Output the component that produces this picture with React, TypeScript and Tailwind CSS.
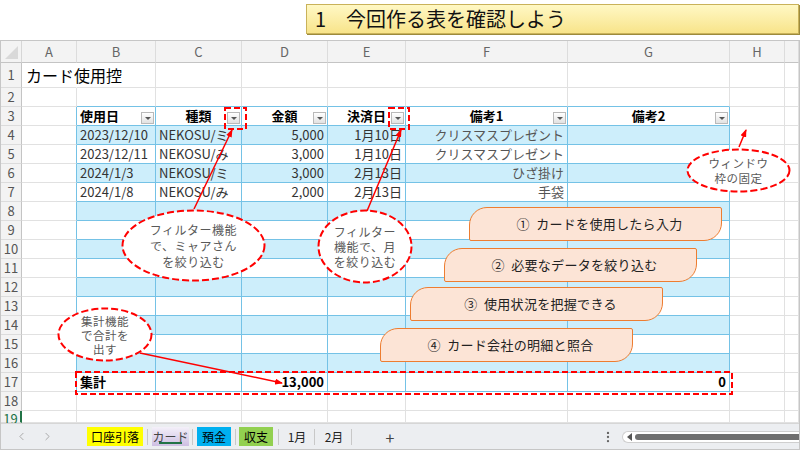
import { ChevronLeft, ChevronRight, EllipsisVertical } from "lucide-react";

type Align = "left" | "right" | "center";
type CellData = { text: string; align?: Align; bold?: boolean; filter?: boolean; tone?: "dim" };

const letters = ["", "A", "B", "C", "D", "E", "F", "G", "H", ""];

const cells: Record<string, CellData> = {
  "1-1": { text: "カード使用控" },
  "3-2": { text: "使用日", bold: true, filter: true },
  "3-3": { text: "種類", bold: true, filter: true, align: "center" },
  "3-4": { text: "金額", bold: true, filter: true, align: "center" },
  "3-5": { text: "決済日", bold: true, filter: true, align: "center" },
  "3-6": { text: "備考1", bold: true, filter: true, align: "center" },
  "3-7": { text: "備考2", bold: true, filter: true, align: "center" },
  "4-2": { text: "2023/12/10" },
  "4-3": { text: "NEKOSU/ミ" },
  "4-4": { text: "5,000", align: "right" },
  "4-5": { text: "1月10日", align: "right" },
  "4-6": { text: "クリスマスプレゼント", align: "right", tone: "dim" },
  "5-2": { text: "2023/12/11" },
  "5-3": { text: "NEKOSU/み" },
  "5-4": { text: "3,000", align: "right" },
  "5-5": { text: "1月10日", align: "right" },
  "5-6": { text: "クリスマスプレゼント", align: "right", tone: "dim" },
  "6-2": { text: "2024/1/3" },
  "6-3": { text: "NEKOSU/ミ" },
  "6-4": { text: "3,000", align: "right" },
  "6-5": { text: "2月13日", align: "right" },
  "6-6": { text: "ひざ掛け", align: "right", tone: "dim" },
  "7-2": { text: "2024/1/8" },
  "7-3": { text: "NEKOSU/み" },
  "7-4": { text: "2,000", align: "right" },
  "7-5": { text: "2月13日", align: "right" },
  "7-6": { text: "手袋", align: "right", tone: "dim" },
  "17-2": { text: "集計", bold: true },
  "17-4": { text: "13,000", bold: true, align: "right" },
  "17-7": { text: "0", bold: true, align: "right" },
};

function FilterButton() {
  return (
    <span className="absolute bottom-[1px] right-[1px] flex h-[12px] w-[13px] items-center justify-center border border-[#b9b9b9] bg-linear-to-b from-white to-[#e2e2e2]">
      <span className="h-0 w-0 border-x-[3px] border-t-[3px] border-x-transparent border-t-[#555]" />
    </span>
  );
}

function SheetCell({ r, c }: { r: number; c: number }) {
  if (r === 0) {
    if (c === 0) {
      return (
        <div className="relative border-r border-b border-r-[#d6d6d6] border-b-[#c4c4c4] bg-[#f3f3f3]">
          <span className="absolute bottom-[3px] right-[3px] h-0 w-0 border-b-[13px] border-l-[13px] border-b-[#d9d9d9] border-l-transparent" />
        </div>
      );
    }
    return (
      <div className="flex items-center justify-center border-r border-b border-r-[#dcdcdc] border-b-[#c4c4c4] bg-[#f3f3f3] text-[13px] text-[#666]">
        {letters[c]}
      </div>
    );
  }

  if (c === 0) {
    return r === 19 ? (
      <div className="flex items-start justify-center border-r-2 border-b border-r-[#217346] border-b-[#dcdcdc] bg-[#f3f3f3] pt-[1px] text-[13px] leading-[13px] text-[#217346]">
        {r}
      </div>
    ) : (
      <div className="flex items-center justify-center border-r border-b border-r-[#c4c4c4] border-b-[#dcdcdc] bg-[#f3f3f3] text-[13px] text-[#555]">
        {r}
      </div>
    );
  }

  const inCols = c >= 2 && c <= 7;
  const blueBottom = inCols && r >= 2 && r <= 17;
  const blueRight = r >= 3 && r <= 17 && c >= 1 && c <= 7;
  const banded = inCols && r >= 4 && r <= 16 && r % 2 === 0;
  const data = cells[`${r}-${c}`];

  const right =
    r === 1 && c === 1 ? "border-r-white" : blueRight ? "border-r-[#74c2e6]" : "border-r-[#e1e1e1]";
  const bottom = blueBottom ? "border-b-[#74c2e6]" : "border-b-[#e1e1e1]";
  const fill = banded ? "bg-[#cdeefb]" : "";

  let textCls = "text-[13px] text-[#333]";
  if (r === 1) textCls = "text-[16px] text-black";
  else if (data?.bold) textCls = "text-[13px] font-bold text-black";
  else if (data?.tone === "dim") textCls = "text-[13px] text-[#555]";

  const align =
    data?.align === "right" ? "justify-end" : data?.align === "center" ? "justify-center" : "justify-start";

  return (
    <div
      className={`relative flex items-center whitespace-nowrap border-r border-b px-[3px] ${right} ${bottom} ${fill} ${align} ${textCls} ${
        r === 1 ? "overflow-visible" : "overflow-hidden"
      }`}
    >
      {data && <span className={r === 1 ? "relative z-10 pl-[1px]" : ""}>{data.text}</span>}
      {data?.filter && <FilterButton />}
    </div>
  );
}

function Bubble({
  box,
  w,
  h,
  text,
  lead,
}: {
  box: string;
  w: number;
  h: number;
  text: string[];
  lead: string;
}) {
  return (
    <div className={`absolute ${box}`}>
      <svg className="absolute inset-0" width={w} height={h}>
        <ellipse
          cx={w / 2}
          cy={h / 2}
          rx={w / 2 - 1.5}
          ry={h / 2 - 1.5}
          fill="white"
          stroke="#ff0000"
          strokeWidth={2}
          strokeDasharray="7 3"
        />
      </svg>
      <div className={`relative flex h-full flex-col items-center justify-center tracking-[0.5px] text-[#595959] ${lead}`}>
        {text.map((t) => (
          <span key={t}>{t}</span>
        ))}
      </div>
    </div>
  );
}

const boxCls =
  "absolute flex h-[34px] w-[253px] items-center justify-center rounded-tl-[18px] rounded-br-[18px] rounded-tr-[2px] rounded-bl-[2px] border-[1.5px] border-[#ed7d31] bg-[#fce4d6] pl-[8px] text-[13px] tracking-[0.3px] text-[#222]";

export default function App() {
  const rows = Array.from({ length: 20 }, (_, r) => r);
  const cols = Array.from({ length: 10 }, (_, c) => c);

  return (
    <div className="relative h-[451px] w-[800px] overflow-hidden bg-white font-['Noto_Sans_CJK_JP',sans-serif]">
      <div className="flex h-[40px] justify-end pr-[1px] pt-[4px]">
        <div className="flex h-[30px] w-[493px] items-center border border-[#c9b25a] bg-linear-to-b from-[#fff8c4] to-[#f8e48a] pl-[8px] text-[20px] text-[#111] shadow-[1px_1px_0_#9c8a3c]">
          <span>1</span>
          <span className="ml-[20px]">今回作る表を確認しよう</span>
        </div>
      </div>

      <div className="flex h-[410px] flex-col border border-[#c6c6c6]">
        <div className="grid grid-cols-[21px_55px_79px_86px_86px_78px_162px_162px_55px_1fr] grid-rows-[22px_25px_repeat(17,19px)_12px]">
          {rows.map((r) => cols.map((c) => <SheetCell key={`${r}-${c}`} r={r} c={c} />))}
        </div>

        <div className="flex h-[26px] items-center border-t border-[#d6d6d6] bg-[#eceef1] text-[12px] text-[#222]">
          <span className="ml-[7px] flex w-[26px] justify-center text-[#9a9a9a]">
            <ChevronLeft size={13} strokeWidth={1.5} />
          </span>
          <span className="flex w-[26px] justify-center text-[#9a9a9a]">
            <ChevronRight size={13} strokeWidth={1.5} />
          </span>
          <span className="ml-[27px] flex h-[19px] w-[56px] items-center justify-center bg-[#ffff00] text-black">口座引落</span>
          <span className="ml-[4px] h-[16px] w-px bg-[#c8c8c8]" />
          <span className="relative ml-[4px] flex h-[19px] w-[37px] items-center justify-center bg-linear-to-b from-[#f4f0f9] to-[#cdbfe2] text-[#444]">
            カード
            <span className="absolute bottom-[2px] left-[7px] h-[2px] w-[23px] bg-[#217346]" />
          </span>
          <span className="ml-[3px] h-[16px] w-px bg-[#c8c8c8]" />
          <span className="ml-[4px] flex h-[19px] w-[34px] items-center justify-center bg-[#00b0f0] text-black">預金</span>
          <span className="ml-[4px] h-[16px] w-px bg-[#c8c8c8]" />
          <span className="ml-[3px] flex h-[19px] w-[34px] items-center justify-center bg-[#92d050] text-black">収支</span>
          <span className="ml-[5px] h-[16px] w-px bg-[#c8c8c8]" />
          <span className="ml-[5px] flex w-[26px] justify-center">1月</span>
          <span className="ml-[4px] h-[16px] w-px bg-[#c8c8c8]" />
          <span className="ml-[6px] flex w-[26px] justify-center">2月</span>
          <span className="ml-[4px] h-[16px] w-px bg-[#c8c8c8]" />
          <span className="ml-[31px] flex w-[14px] justify-center text-[16px] text-[#444]">+</span>
          <span className="ml-auto flex w-[14px] justify-center text-[#666]">
            <EllipsisVertical size={14} />
          </span>
          <div className="ml-[7px] flex h-[12px] w-[177px] items-center rounded-l-full border border-r-0 border-[#cfcfcf] bg-white pl-[4px]">
            <span className="h-0 w-0 border-y-[4px] border-r-[5px] border-y-transparent border-r-[#555]" />
            <span className="ml-[3px] h-[6px] flex-1 rounded-l-full bg-[#6f6f6f]" />
          </div>
        </div>
      </div>

      {/* annotations */}
      <Bubble box="left-[121px] top-[209px] h-[73px] w-[145px]" w={145} h={73} lead="text-[12px] leading-[16px]" text={["フィルター機能", "で、ミャアさん", "を絞り込む"]} />
      <Bubble box="left-[317px] top-[209px] h-[75px] w-[96px]" w={96} h={75} lead="text-[12px] leading-[15px]" text={["フィルター", "機能で、月", "を絞り込む"]} />
      <Bubble box="left-[686px] top-[148px] h-[45px] w-[105px]" w={105} h={45} lead="text-[11.5px] leading-[15px]" text={["ウィンドウ", "枠の固定"]} />
      <Bubble box="left-[57px] top-[307px] h-[55px] w-[96px]" w={96} h={55} lead="text-[11.5px] leading-[14px]" text={["集計機能", "で合計を", "出す"]} />

      <div className={`${boxCls} left-[469px] top-[207px]`}>①&nbsp;&nbsp;カードを使用したら入力</div>
      <div className={`${boxCls} left-[444px] top-[248px] w-[252px]`}>②&nbsp;&nbsp;必要なデータを絞り込む</div>
      <div className={`${boxCls} left-[410px] top-[287px] w-[252px]`}>③&nbsp;&nbsp;使用状況を把握できる</div>
      <div className={`${boxCls} left-[380px] top-[328px] w-[252px]`}>④&nbsp;&nbsp;カード会社の明細と照合</div>

      <svg className="pointer-events-none absolute inset-0" width={800} height={451}>
        <defs>
          <marker id="ah" markerWidth="8" markerHeight="6" refX="7" refY="3" orient="auto" markerUnits="userSpaceOnUse">
            <path d="M0,0 L8,3 L0,6 z" fill="#ff0000" />
          </marker>
        </defs>
        <g fill="none" stroke="#ff0000" strokeWidth={2} strokeDasharray="6 3">
          <rect x={225} y={108} width={21} height={21} />
          <rect x={389} y={108} width={20} height={21} />
          <rect x={76} y={372} width={656} height={22} />
        </g>
        <g stroke="#ff0000" strokeWidth={1.5}>
          <line x1={194} y1={209} x2={232} y2={130} markerEnd="url(#ah)" />
          <line x1={367} y1={211} x2={401} y2={130} markerEnd="url(#ah)" />
          <line x1={739} y1={147} x2={746} y2={130} markerEnd="url(#ah)" />
          <line x1={140} y1={353} x2={282} y2={383} markerEnd="url(#ah)" />
        </g>
      </svg>
    </div>
  );
}
